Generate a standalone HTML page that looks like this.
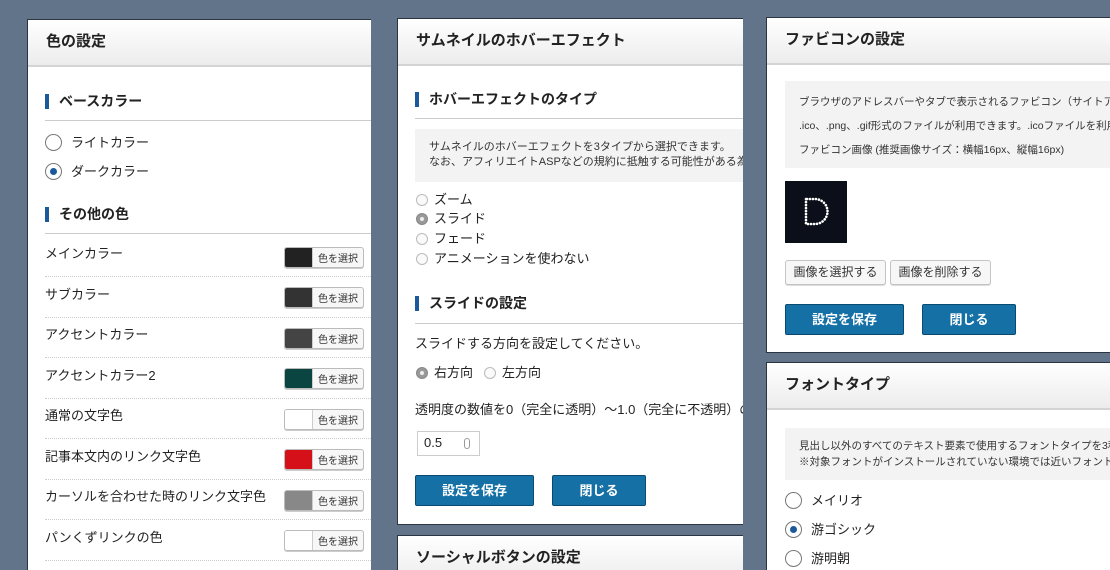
<!DOCTYPE html>
<html><head><meta charset="utf-8"><style>
*{box-sizing:border-box;margin:0;padding:0}
html,body{width:1110px;height:570px;overflow:hidden}
body{background:#627489;font-family:"Liberation Sans","Noto Sans CJK JP",sans-serif;color:#222;position:relative}
.p{position:absolute;background:#fff;overflow:hidden;border:1px solid #2b3440}
.hd{position:absolute;left:0;right:0;top:0;height:47px;background:linear-gradient(#fff,#ececec);border-bottom:2px solid #d4d4d4}
.hd span{position:absolute;left:18px;top:10px;font-size:15px;font-weight:bold}
.a{position:absolute;white-space:nowrap}
.sec{position:absolute;font-size:14px;font-weight:bold;padding-left:10px;border-left:4px solid #1a5a9a;line-height:15px}
.ln{position:absolute;height:1px;background:#ccc}
.dl{position:absolute;height:0;border-top:1px dotted #ccc}
.rb{position:absolute;width:17px;height:17px;border:1px solid #777;border-radius:50%;background:#fff}
.rb.on::after{content:"";position:absolute;left:4px;top:4px;width:7px;height:7px;border-radius:50%;background:#1a5a9a}
.rs{position:absolute;width:12px;height:12px;border:1px solid #bbb;border-radius:50%;background:#fafafa}
.rs.on{background:#999;border-color:#888}
.rs.on::after{content:"";position:absolute;left:3px;top:3px;width:4px;height:4px;border-radius:50%;background:#eee}
.sw{position:absolute;width:80px;height:21px;border:1px solid #bbb;border-radius:3px;background:#f7f7f7;box-shadow:0 1px 0 #ccc;overflow:hidden}
.sw i{position:absolute;left:0;top:0;bottom:0;width:28px;border-right:1px solid #ccc}
.sw b{position:absolute;left:33px;top:2px;font-size:10px;font-weight:normal;color:#333}
.gb{position:absolute;background:#f3f3f3;font-size:11px;color:#333}
.bb{position:absolute;background:#1570a6;border:1px solid #0b4a70;border-radius:2px;color:#fff;font-size:13px;font-weight:bold;text-align:center}
.gbtn{position:absolute;background:#f7f7f7;border:1px solid #c4c4c4;border-radius:3px;font-size:12px;text-align:center;color:#333;box-shadow:0 1px 0 #ddd}
.t13{font-size:13px;margin-top:-3px}
</style></head><body>

<!-- Panel 1 -->
<div class="p" style="left:27px;top:19px;width:344px;height:570px;border-right:none">
<div class="hd"><span>色の設定</span></div>
<div class="sec" style="left:17px;top:74px">ベースカラー</div>
<div class="ln" style="left:17px;right:0;top:100px"></div>
<div class="rb" style="left:17px;top:114px"></div><div class="a t13" style="left:43px;top:115px">ライトカラー</div>
<div class="rb on" style="left:17px;top:143px"></div><div class="a t13" style="left:43px;top:144px">ダークカラー</div>
<div class="sec" style="left:17px;top:187px">その他の色</div>
<div class="ln" style="left:17px;right:0;top:213px"></div>
<div class="a t13" style="left:17px;top:226px">メインカラー</div><div class="sw" style="left:256px;top:227px"><i style="background:#222"></i><b>色を選択</b></div>
<div class="dl" style="left:17px;right:0;top:256px"></div>
<div class="a t13" style="left:17px;top:267px">サブカラー</div><div class="sw" style="left:256px;top:267px"><i style="background:#333"></i><b>色を選択</b></div>
<div class="dl" style="left:17px;right:0;top:297px"></div>
<div class="a t13" style="left:17px;top:307px">アクセントカラー</div><div class="sw" style="left:256px;top:308px"><i style="background:#444"></i><b>色を選択</b></div>
<div class="dl" style="left:17px;right:0;top:337px"></div>
<div class="a t13" style="left:17px;top:348px">アクセントカラー2</div><div class="sw" style="left:256px;top:348px"><i style="background:#0a4542"></i><b>色を選択</b></div>
<div class="dl" style="left:17px;right:0;top:378px"></div>
<div class="a t13" style="left:17px;top:388px">通常の文字色</div><div class="sw" style="left:256px;top:389px"><i style="background:#fff"></i><b>色を選択</b></div>
<div class="dl" style="left:17px;right:0;top:418px"></div>
<div class="a t13" style="left:17px;top:429px">記事本文内のリンク文字色</div><div class="sw" style="left:256px;top:429px"><i style="background:#d61018"></i><b>色を選択</b></div>
<div class="dl" style="left:17px;right:0;top:459px"></div>
<div class="a t13" style="left:17px;top:469px">カーソルを合わせた時のリンク文字色</div><div class="sw" style="left:256px;top:470px"><i style="background:#888"></i><b>色を選択</b></div>
<div class="dl" style="left:17px;right:0;top:499px"></div>
<div class="a t13" style="left:17px;top:510px">パンくずリンクの色</div><div class="sw" style="left:256px;top:510px"><i style="background:#fff"></i><b>色を選択</b></div>
<div class="dl" style="left:17px;right:0;top:540px"></div>
</div>

<!-- Panel 2 -->
<div class="p" style="left:397px;top:18px;width:346px;height:507px;border-right:none">
<div class="hd"><span>サムネイルのホバーエフェクト</span></div>
<div class="sec" style="left:17px;top:73px">ホバーエフェクトのタイプ</div>
<div class="ln" style="left:17px;right:0;top:99px"></div>
<div class="gb" style="left:17px;top:110px;width:330px;height:53px;padding:11px 0 0 14px;line-height:15px;white-space:nowrap">サムネイルのホバーエフェクトを3タイプから選択できます。<br>なお、アフィリエイトASPなどの規約に抵触する可能性がある為、広告</div>
<div class="rs" style="left:18px;top:175px"></div><div class="a t13" style="left:36px;top:173px">ズーム</div>
<div class="rs on" style="left:18px;top:194px"></div><div class="a t13" style="left:36px;top:192px">スライド</div>
<div class="rs" style="left:18px;top:214px"></div><div class="a t13" style="left:36px;top:212px">フェード</div>
<div class="rs" style="left:18px;top:234px"></div><div class="a t13" style="left:36px;top:232px">アニメーションを使わない</div>
<div class="sec" style="left:17px;top:277px">スライドの設定</div>
<div class="ln" style="left:17px;right:0;top:304px"></div>
<div class="a t13" style="left:17px;top:317px">スライドする方向を設定してください。</div>
<div class="rs on" style="left:18px;top:348px"></div><div class="a t13" style="left:36px;top:346px">右方向</div>
<div class="rs" style="left:86px;top:348px"></div><div class="a t13" style="left:104px;top:346px">左方向</div>
<div class="a t13" style="left:17px;top:383px">透明度の数値を0（完全に透明）〜1.0（完全に不透明）の範囲</div>
<div class="a" style="left:19px;top:412px;width:63px;height:25px;border:1px solid #ccc;font-size:13px;padding:3px 0 0 6px">0.5<span style="position:absolute;right:9px;top:6px;width:6px;height:11px;border:1px solid #999;border-radius:3px"></span></div>
<div class="bb" style="left:17px;top:456px;width:119px;height:31px;line-height:29px">設定を保存</div>
<div class="bb" style="left:154px;top:456px;width:94px;height:31px;line-height:29px">閉じる</div>
</div>
<div class="p" style="left:397px;top:535px;width:346px;height:60px;border-right:none">
<div class="hd"><span>ソーシャルボタンの設定</span></div>
</div>

<!-- Panel 3 -->
<div class="p" style="left:766px;top:17px;width:350px;height:336px;border-right:none">
<div class="hd"><span>ファビコンの設定</span></div>
<div class="gb" style="left:18px;top:63px;width:330px;height:87px;padding:9px 0 0 14px;line-height:24px;white-space:nowrap;font-size:10.5px">ブラウザのアドレスバーやタブで表示されるファビコン（サイトアイコ<br>.ico、.png、.gif形式のファイルが利用できます。.icoファイルを利用さ<br>ファビコン画像 (推奨画像サイズ：横幅16px、縦幅16px)</div>
<div class="a" style="left:18px;top:163px;width:62px;height:62px;background:#0b0f1a">
<svg width="62" height="62" viewBox="0 0 62 62"><path d="M21 18 V43 H30 A12.5 12.5 0 0 0 30 18 Z" fill="none" stroke="#fff" stroke-width="2.6" stroke-dasharray="0.1 2.9" stroke-linecap="round"/></svg>
</div>
<div class="gbtn" style="left:18px;top:242px;width:101px;height:25px;line-height:23px">画像を選択する</div>
<div class="gbtn" style="left:123px;top:242px;width:101px;height:25px;line-height:23px">画像を削除する</div>
<div class="bb" style="left:18px;top:286px;width:119px;height:31px;line-height:29px">設定を保存</div>
<div class="bb" style="left:155px;top:286px;width:94px;height:31px;line-height:29px">閉じる</div>
</div>

<!-- Panel 4 -->
<div class="p" style="left:766px;top:362px;width:350px;height:220px;border-right:none">
<div class="hd"><span>フォントタイプ</span></div>
<div class="gb" style="left:18px;top:65px;width:330px;height:52px;padding:10px 0 0 14px;line-height:16px;white-space:nowrap;font-size:10.5px">見出し以外のすべてのテキスト要素で使用するフォントタイプを3種類<br>※対象フォントがインストールされていない環境では近いフォントタイ</div>
<div class="rb" style="left:18px;top:129px"></div><div class="a t13" style="left:44px;top:130px">メイリオ</div>
<div class="rb on" style="left:18px;top:158px"></div><div class="a t13" style="left:44px;top:159px">游ゴシック</div>
<div class="rb" style="left:18px;top:187px"></div><div class="a t13" style="left:44px;top:188px">游明朝</div>
</div>
</body></html>
